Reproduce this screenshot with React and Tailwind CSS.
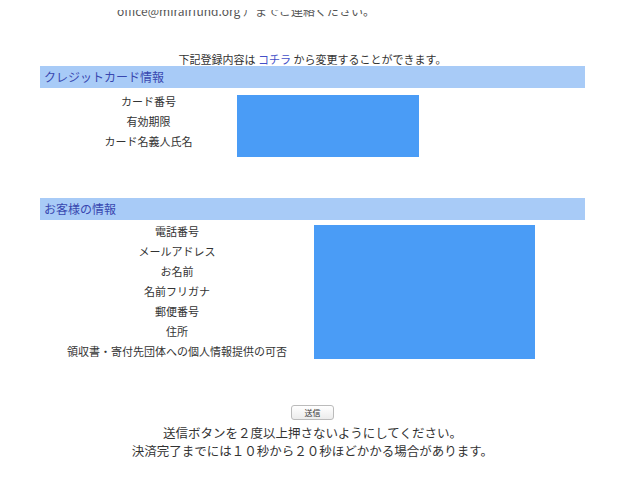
import React from "react";

const font = { fontFamily: '"Noto Sans CJK JP", "Noto Sans", sans-serif' };

const cardRows = ["カード番号", "有効期限", "カード名義人氏名"];
const customerRows = [
  "電話番号",
  "メールアドレス",
  "お名前",
  "名前フリガナ",
  "郵便番号",
  "住所",
  "領収書・寄付先団体への個人情報提供の可否",
];

const SectionHeader = ({ title }) => (
  <div className="h-[22px] bg-[#a8cbf7] pl-[4px] flex items-center text-[12px] text-[#3848b0]">
    {title}
  </div>
);

export default function App() {
  return (
    <div className="w-[640px] h-[480px] overflow-hidden bg-white text-[#333]" style={font}>
      {/* scrolled-off line, only its lower half shows */}
      <div className="h-[22px] pt-[10px]">
        <div className="h-[12px] overflow-hidden">
          <div className="-mt-[7px] pl-[117px] text-[12px] leading-[16px] text-[#555] whitespace-nowrap">
            office@mirairfund.org ）までご連絡ください。
          </div>
        </div>
      </div>

      <div className="ml-[40px] w-[545px]">
        <p className="mt-[29px] text-center text-[11px] leading-[16px]">
          下記登録内容は <span className="text-[#4450c8]">コチラ</span> から変更することができます。
        </p>

        <div className="mt-[-1px]">
          <SectionHeader title="クレジットカード情報" />
        </div>
        <div className="flex pt-[7px]">
          <div className="w-[197px] pl-[20px] -mt-[4px] flex flex-col">
            {cardRows.map((r) => (
              <div key={r} className="h-[20px] flex items-center justify-center text-[11px]">
                {r}
              </div>
            ))}
          </div>
          <div className="w-[182px] h-[62px] bg-[#4a9cf6]" />
        </div>

        <div className="mt-[41px]">
          <SectionHeader title="お客様の情報" />
        </div>
        <div className="flex pt-[5px]">
          <div className="w-[274px] flex flex-col -mt-[4px]">
            {customerRows.map((r) => (
              <div key={r} className="h-[20px] flex items-center justify-center text-[11px]">
                {r}
              </div>
            ))}
          </div>
          <div className="w-[221px] h-[134px] bg-[#4a9cf6]" />
        </div>

        <div className="mt-[44px] flex flex-col items-center">
          <button className="h-[15px] w-[43px] rounded-[3px] border border-[#bbb] bg-gradient-to-b from-white to-[#ececec] text-[8px] leading-none text-[#333]">
            送信
          </button>
          <p className="mt-[4px] text-[12.5px] leading-[18px]">
            送信ボタンを２度以上押さないようにしてください。
          </p>
          <p className="text-[12.5px] leading-[18px]">
            決済完了までには１０秒から２０秒ほどかかる場合があります。
          </p>
        </div>
      </div>
    </div>
  );
}
